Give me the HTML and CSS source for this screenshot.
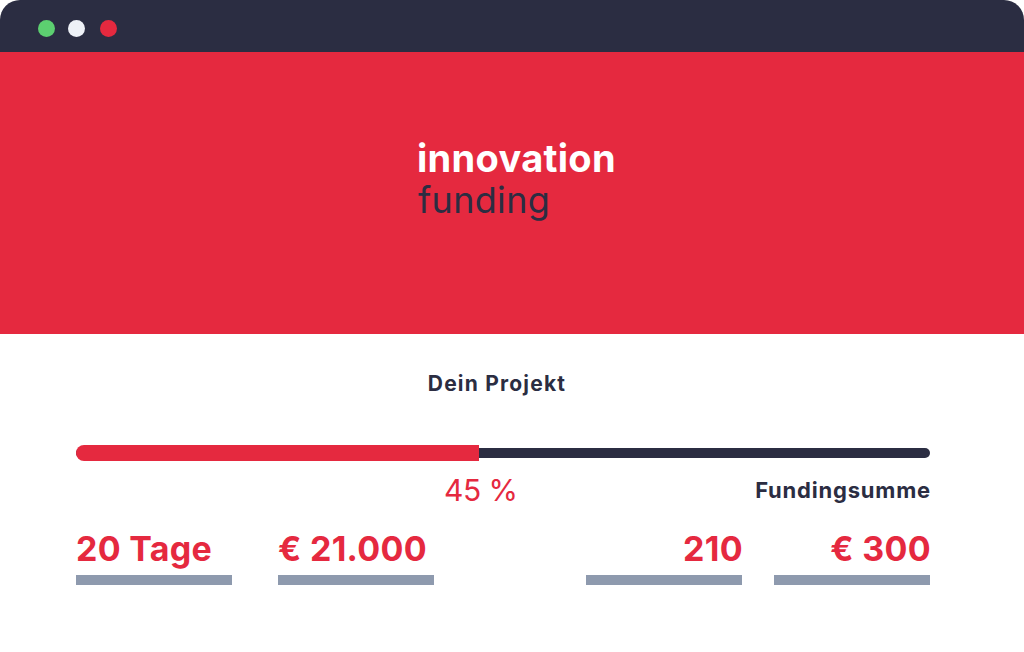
FILE: index.html
```html
<!DOCTYPE html>
<html lang="de">
<head>
<meta charset="utf-8">
<title>innovation funding</title>
<link rel="stylesheet" href="styles.css">
</head>
<body>
<div class="window">
  <div class="titlebar">
    <span class="dot dot-green"></span>
    <span class="dot dot-white"></span>
    <span class="dot dot-red"></span>
  </div>
  <div class="hero">
    <div class="logo">
      <div class="logo-top">innovation</div>
      <div class="logo-bottom">funding</div>
    </div>
  </div>
  <div class="content">
    <h2 class="title">Dein Projekt</h2>
    <div class="progress">
      <div class="progress-track"></div>
      <div class="progress-fill" style="width: 403px"></div>
    </div>
    <div class="labels">
      <span class="percent">45 %</span>
      <span class="sum-label">Fundingsumme</span>
    </div>
    <div class="stats">
      <div class="stat-group stat-group-left">
        <div class="stat"><div class="stat-value">20 Tage</div><div class="stat-bar"></div></div>
        <div class="stat"><div class="stat-value">€ 21.000</div><div class="stat-bar"></div></div>
      </div>
      <div class="stat-group stat-group-right">
        <div class="stat stat-right"><div class="stat-value">210</div><div class="stat-bar"></div></div>
        <div class="stat stat-right"><div class="stat-value">€ 300</div><div class="stat-bar"></div></div>
      </div>
    </div>
  </div>
</div>
</body>
</html>
```

FILE: styles.css
```css
* { box-sizing: border-box; }
html, body { margin: 0; padding: 0; background: #ffffff; }
body { font-family: "Inter", "Noto Sans", sans-serif; }

.window { width: 1024px; height: 652px; overflow: hidden; }

.titlebar {
  height: 52px;
  background: #2b2d42;
  border-radius: 20px 20px 0 0;
  display: flex;
  align-items: flex-start;
  padding: 20px 0 0 38px;
  gap: 13px;
}
.dot { width: 17px; height: 17px; border-radius: 50%; display: block; }
.dot-green { background: #5ccf70; }
.dot-white { background: #eef1f7; }
.dot-red { background: #e5293f; margin-left: 2px; }

.hero {
  height: 282px;
  background: #e5293f;
  padding: 86px 0 0 417px;
}
.logo-top {
  color: #ffffff;
  font-weight: 700;
  font-size: 38px;
  line-height: 40px;
  letter-spacing: 0.3px;
}
.logo-bottom {
  color: #2b2d42;
  font-weight: 400;
  font-size: 36px;
  line-height: 40px;
  margin-top: 2px;
  padding-left: 1px;
  letter-spacing: 0.3px;
}

.content { padding: 0 94px 0 76px; }

.title {
  margin: 0;
  padding-top: 37px;
  text-align: center;
  font-size: 21px;
  line-height: 26px;
  font-weight: 700;
  color: #2b2d42;
  padding-right: 12px;
  letter-spacing: 1.2px;
}

.progress {
  position: relative;
  height: 16px;
  margin-top: 48px;
}
.progress-track {
  position: absolute;
  left: 0; right: 0; top: 3px;
  height: 10px;
  background: #2b2d42;
  border-radius: 5px;
}
.progress-fill {
  position: absolute;
  left: 0; top: 0;
  height: 16px;
  background: #e5293f;
  border-radius: 8px 0 0 8px;
}

.labels {
  display: flex;
  align-items: center;
  justify-content: space-between;
  margin-top: 12px;
  height: 34px;
}
.percent {
  margin-left: 368px;
  color: #e5293f;
  font-size: 30px;
  font-weight: 400;
  letter-spacing: -0.5px;
}
.sum-label {
  color: #2b2d42;
  font-size: 22px;
  font-weight: 700;
  letter-spacing: 0.8px;
  margin-right: -1px;
}

.stats {
  display: flex;
  justify-content: space-between;
  margin-top: 22px;
}
.stat-group { display: flex; }
.stat-group-left { gap: 46px; }
.stat-group-right { gap: 32px; }
.stat { width: 156px; }
.stat-right { text-align: right; }
.stat-right .stat-value { margin-right: -1px; }
.stat-value {
  color: #e5293f;
  font-size: 34px;
  font-weight: 700;
  line-height: 40px;
  letter-spacing: 0.3px;
  white-space: nowrap;
}
.stat-bar {
  height: 10px;
  background: #8e9aae;
  margin-top: 6px;
}
```
